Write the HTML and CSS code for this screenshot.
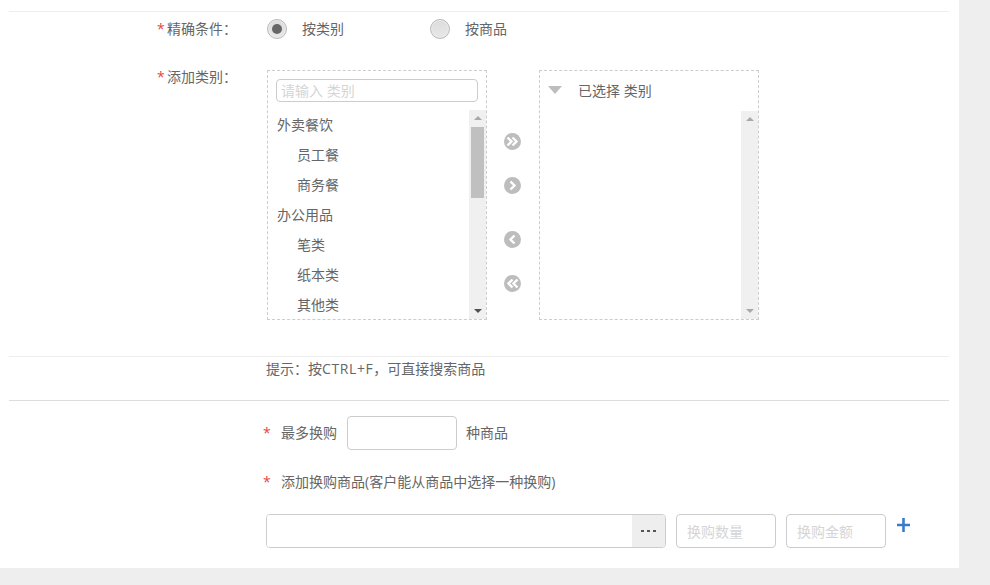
FILE: index.html
```html
<!DOCTYPE html>
<html lang="zh">
<head>
<meta charset="utf-8">
<title>换购</title>
<link rel="stylesheet" href="styles.css">
</head>
<body>
<main class="panel">
  <section class="scope">
    <div class="row row-radio">
      <div class="label"><span class="star">*</span>精确条件：</div>
      <div class="radios">
        <div class="radio-item first"><span class="radio checked"></span><span>按类别</span></div>
        <div class="radio-item"><span class="radio"></span><span>按商品</span></div>
      </div>
    </div>
    <div class="row row-picker">
      <div class="label"><span class="star">*</span>添加类别：</div>
      <div class="picker">
        <div class="box">
          <input class="search" type="text" placeholder="请输入 类别">
          <div class="box-body left-body">
            <ul class="tree">
              <li>外卖餐饮</li>
              <li class="child">员工餐</li>
              <li class="child">商务餐</li>
              <li>办公用品</li>
              <li class="child">笔类</li>
              <li class="child">纸本类</li>
              <li class="child">其他类</li>
            </ul>
            <div class="scrollbar">
              <span class="arrow up"></span>
              <span class="thumb"></span>
              <span class="arrow down dark"></span>
            </div>
          </div>
        </div>
        <div class="moves">
          <svg class="move" viewBox="0 0 17 17"><circle cx="8.5" cy="8.5" r="8.5"/><path d="M3.500 4.500l4 4-4 4M8.500 4.500l4 4-4 4"/></svg>
          <svg class="move" viewBox="0 0 17 17"><circle cx="8.5" cy="8.5" r="8.5"/><path d="M6.500 4.500l4 4-4 4"/></svg>
          <svg class="move gap" viewBox="0 0 17 17"><circle cx="8.5" cy="8.5" r="8.5"/><path d="M10.500 4.500l-4 4 4 4"/></svg>
          <svg class="move" viewBox="0 0 17 17"><circle cx="8.5" cy="8.5" r="8.5"/><path d="M8.500 4.500l-4 4 4 4M13.500 4.500l-4 4 4 4"/></svg>
        </div>
        <div class="box">
          <div class="selected-head"><span class="caret"></span><span>已选择 类别</span></div>
          <div class="box-body right-body">
            <div class="scrollbar">
              <span class="arrow up"></span>
              <span class="arrow down"></span>
            </div>
          </div>
        </div>
      </div>
    </div>
  </section>
  <p class="tip">提示：按<span class="keys">CTRL+F</span>，可直接搜索商品</p>
  <section class="swap">
    <div class="swap-row">
      <span class="swap-star">*</span>
      <span>最多换购</span>
      <input class="field count" type="text">
      <span>种商品</span>
    </div>
    <div class="swap-row add-title">
      <span class="swap-star">*</span>
      <span>添加换购商品(客户能从商品中选择一种换购)</span>
    </div>
    <div class="goods-row">
      <div class="goods">
        <input class="goods-input" type="text">
        <span class="more"><i></i><i></i><i></i></span>
      </div>
      <input class="field small" type="text" placeholder="换购数量">
      <input class="field small" type="text" placeholder="换购金额">
      <svg class="plus" viewBox="0 0 13 14"><path d="M5.200 0h2.600v5.700H13v2.600H7.800V14H5.200V8.300H0V5.700h5.200z"/></svg>
    </div>
  </section>
</main>
</body>
</html>
```
FILE: styles.css
```css
* { box-sizing: border-box; }
html, body { margin: 0; height: 100%; }
body {
  background: #eeeeee;
  color: #666;
  font: 14px/20px "Open Sans", "Noto Sans CJK SC", sans-serif;
  overflow: hidden;
}
.panel {
  width: 959px;
  height: 568px;
  background: #fff;
  padding: 11px 10px 0 9px;
}
.scope {
  height: 346px;
  border-top: 1px solid #eee;
  border-bottom: 1px solid #eee;
}
.row { display: flex; }
.label {
  width: 258px;
  padding-left: 148px;
  white-space: nowrap;
  line-height: 20px;
}
.star { color: #e8453c; display: inline-block; width: 10px; }
.row-radio { height: 58px; padding-top: 7px; }
.radios { display: flex; align-items: center; height: 20px; }
.radio-item { display: flex; align-items: center; gap: 15px; width: 163px; }
.radio {
  width: 20px;
  height: 20px;
  border-radius: 50%;
  border: 1px solid #b9b9b9;
  background: linear-gradient(#dcdcdc, #e8e8e8);
  box-shadow: inset 0 0 0 1px #ececec;
  display: flex;
  align-items: center;
  justify-content: center;
}
.radio.checked::after {
  content: "";
  width: 10px;
  height: 10px;
  border-radius: 50%;
  background: #666;
}
.row-picker .label { margin-top: -3px; }
.picker { display: flex; }
.box {
  width: 220px;
  height: 250px;
  border: 1px dashed #ccc;
  display: flex;
  flex-direction: column;
}
.search {
  width: 202px;
  height: 23px;
  margin: 8px 0 8px 8px;
  padding: 0 4px;
  border: 1px solid #ccc;
  border-radius: 4px;
  font: inherit;
  outline: 0;
  flex: none;
}
input::placeholder { color: #d5d5d5; opacity: 1; }
.box-body { display: flex; flex: 1; min-height: 0; }
.tree {
  list-style: none;
  margin: 0;
  padding: 0 0 0 9px;
  flex: 1;
  overflow: hidden;
}
.tree li { height: 30px; line-height: 30px; }
.tree .child { padding-left: 20px; }
.scrollbar {
  width: 17px;
  background: #f0f0f0;
  display: flex;
  flex-direction: column;
  align-items: center;
  margin-left: auto;
}
.arrow {
  width: 0;
  height: 0;
  border-left: 4px solid transparent;
  border-right: 4px solid transparent;
  flex: none;
}
.arrow.up { border-bottom: 4px solid #a9a9a9; margin-top: 6px; margin-bottom: 7px; }
.arrow.down { border-top: 4px solid #a9a9a9; margin-top: auto; margin-bottom: 6px; }
.arrow.down.dark { border-top-color: #505050; }
.thumb { width: 13px; height: 71px; background: #c0c0c0; flex: none; }
.moves {
  width: 52px;
  padding: 63px 0 0 17px;
  display: flex;
  flex-direction: column;
  gap: 27px;
}
.move { width: 17px; height: 17px; flex: none; }
.move circle { fill: #bdbdbd; }
.move path { fill: none; stroke: #fff; stroke-width: 2.4; }
.move.gap { margin-top: 10px; }
.selected-head {
  height: 40px;
  padding-left: 8px;
  display: flex;
  align-items: center;
  gap: 16px;
  flex: none;
}
.caret {
  width: 0;
  height: 0;
  border-left: 7.5px solid transparent;
  border-right: 7.5px solid transparent;
  border-top: 8px solid #bdbdbd;
  margin-top: -2px;
}
.tip {
  margin: 0;
  height: 44px;
  padding: 2px 0 0 257px;
  border-bottom: 1px solid #ddd;
}
.keys { letter-spacing: 0.6px; }
.swap { padding-top: 15px; }
.swap-row { display: flex; align-items: center; height: 34px; }
.swap-star { color: #e8453c; width: 18px; margin-left: 254px; }
.count { width: 110px; height: 34px; margin: 0 9px 0 10px; }
.field {
  border: 1px solid #ccc;
  border-radius: 4px;
  padding: 0 10px;
  font: inherit;
  outline: 0;
  background: #fff;
}
.add-title { margin-top: 15px; }
.goods-row { display: flex; align-items: flex-start; padding-left: 257px; margin-top: 15px; }
.goods {
  width: 400px;
  height: 34px;
  border: 1px solid #ccc;
  border-radius: 4px;
  display: flex;
  overflow: hidden;
  margin-right: 10px;
}
.goods-input { flex: 1; min-width: 0; border: 0; outline: 0; }
.more {
  width: 33px;
  background: #eee;
  display: flex;
  align-items: center;
  justify-content: center;
  gap: 3px;
}
.more i { width: 3px; height: 2px; background: #555; margin-top: -1px; }
.small { width: 100px; height: 34px; margin-right: 10px; }
.plus { width: 13px; height: 14px; margin: 4px 0 0 1px; fill: #3a7cc9; flex: none; }
```
